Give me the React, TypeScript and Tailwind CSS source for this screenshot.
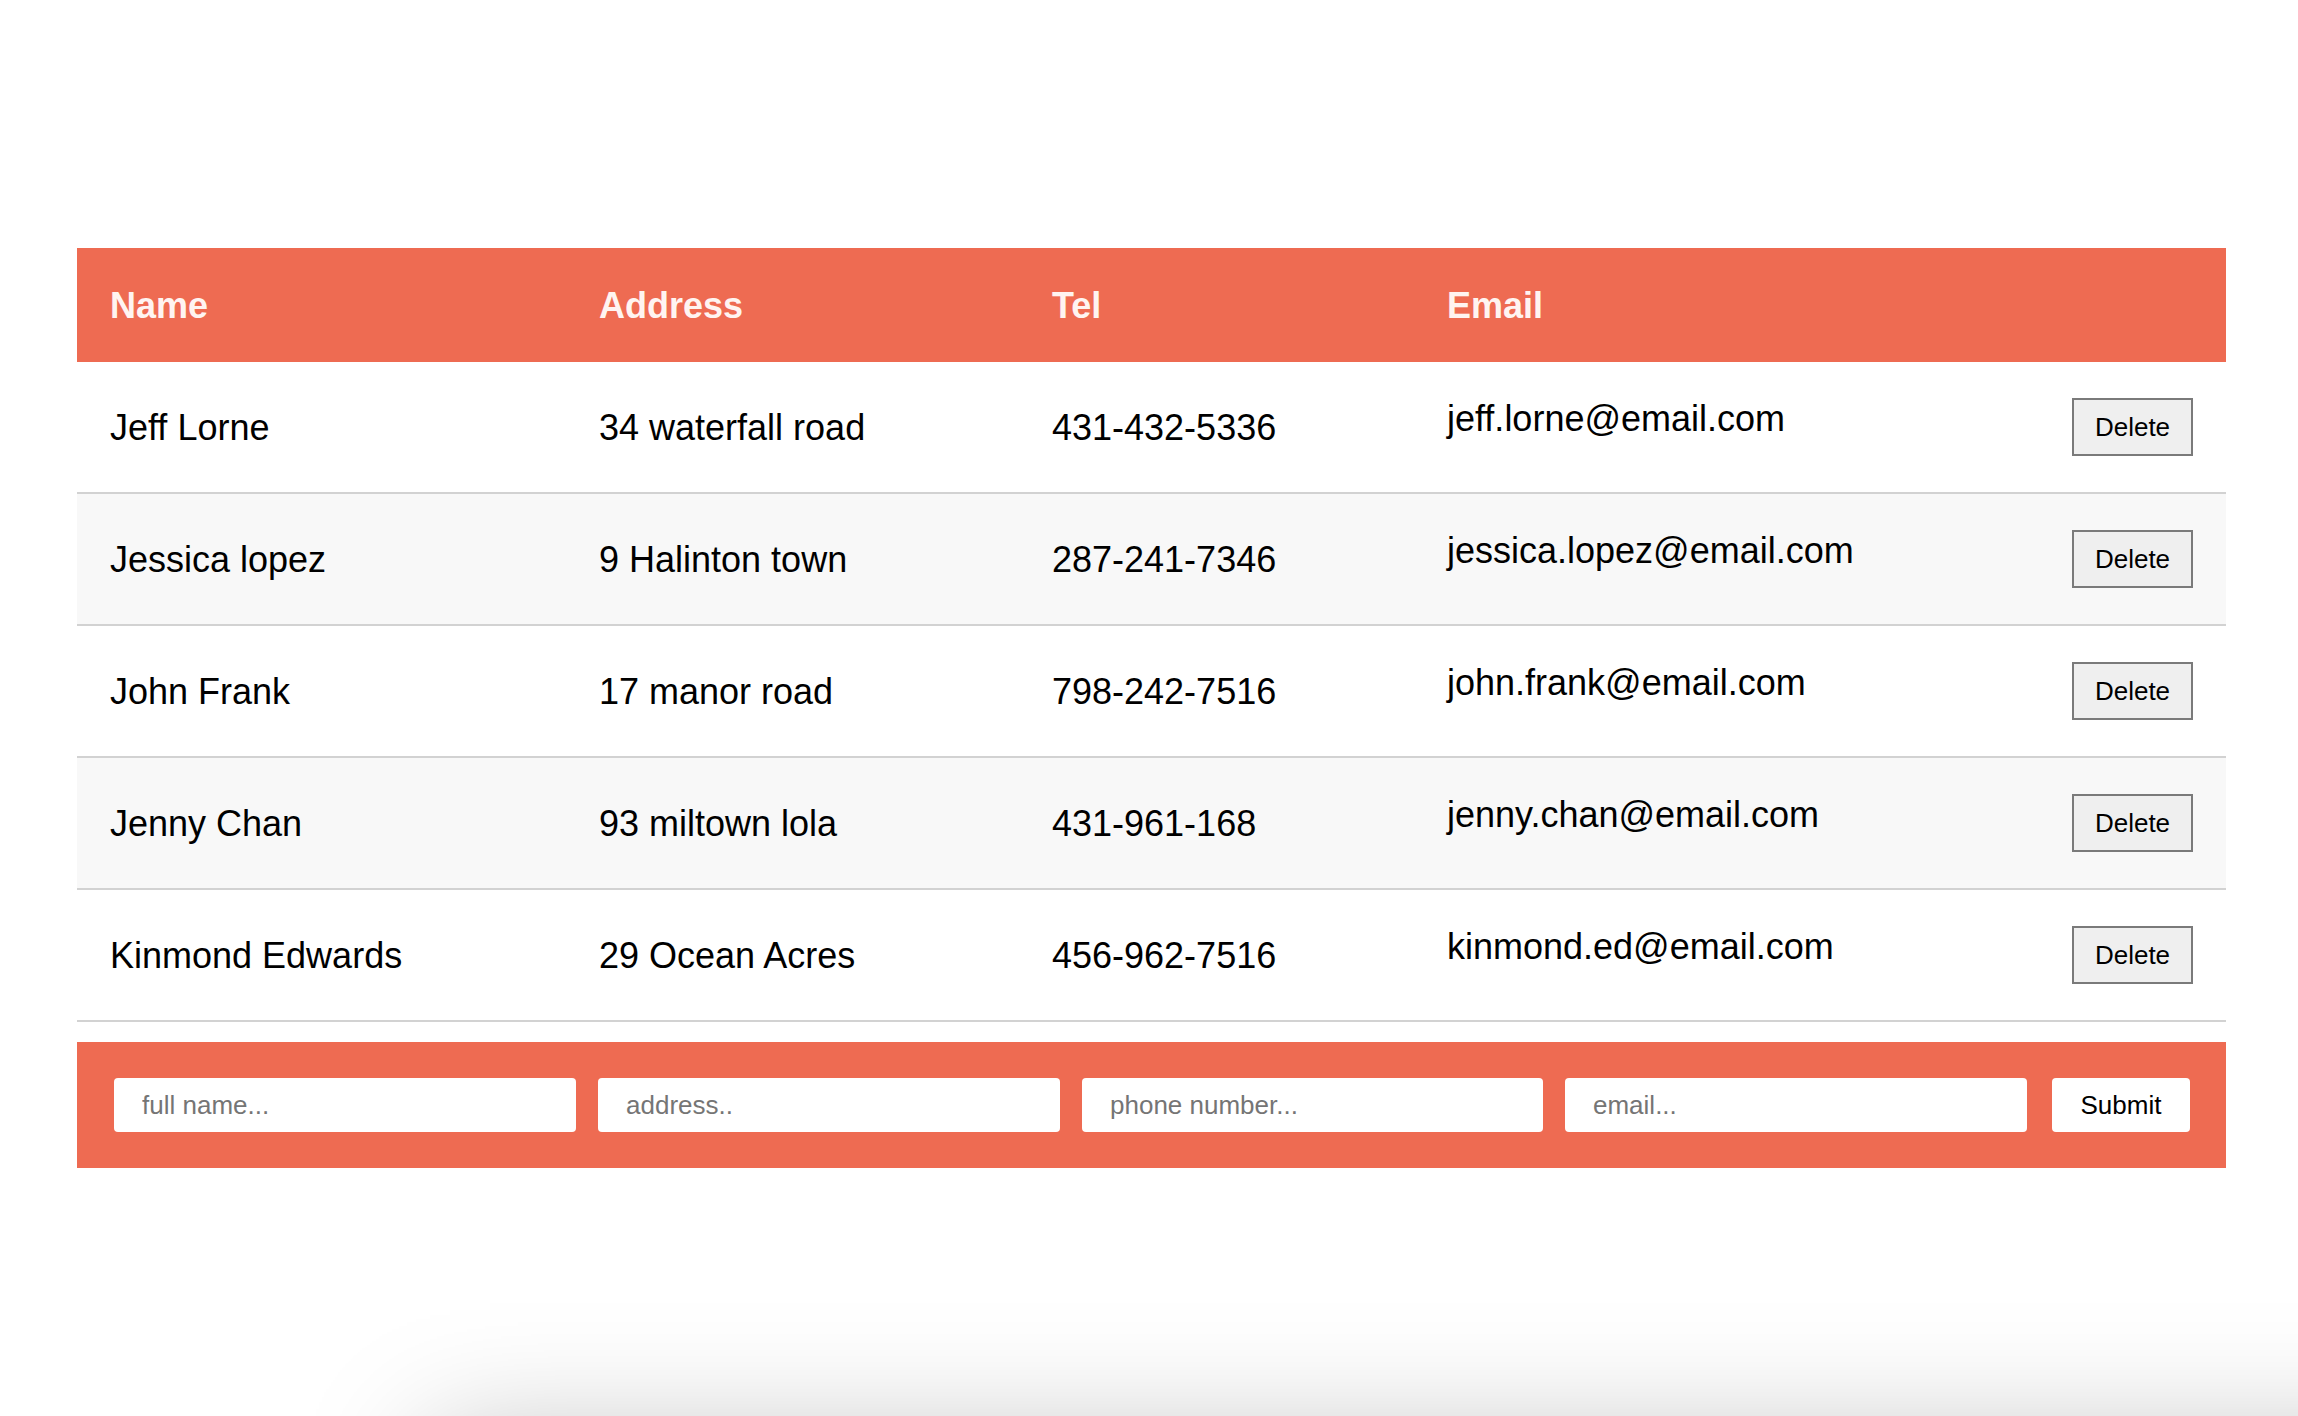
import React from "react";

const rows = [
  { name: "Jeff Lorne", address: "34 waterfall road", tel: "431-432-5336", email: "jeff.lorne@email.com" },
  { name: "Jessica lopez", address: "9 Halinton town", tel: "287-241-7346", email: "jessica.lopez@email.com" },
  { name: "John Frank", address: "17 manor road", tel: "798-242-7516", email: "john.frank@email.com" },
  { name: "Jenny Chan", address: "93 miltown lola", tel: "431-961-168", email: "jenny.chan@email.com" },
  { name: "Kinmond Edwards", address: "29 Ocean Acres", tel: "456-962-7516", email: "kinmond.ed@email.com" },
];

export default function App() {
  return (
    <div
      className="relative min-h-[1416px] bg-white pt-[248px] text-black"
      style={{ fontFamily: '"Liberation Sans", Arial, Helvetica, sans-serif' }}
    >
      <div className="ml-[77px] w-[2149px]">
        <div className="grid h-[114px] grid-cols-[489px_453px_395px_812px] items-center bg-[#ee6b52] text-[36px] font-bold leading-[41px] text-[#fff4f1]">
          <div className="pl-[33px]">Name</div>
          <div className="pl-[33px]">Address</div>
          <div className="pl-[33px]">Tel</div>
          <div className="pl-[33px]">Email</div>
        </div>
        {rows.map((r, i) => (
          <div
            key={r.name}
            className={
              "grid h-[132px] grid-cols-[489px_453px_395px_812px] items-center border-b-2 border-[#d2d2d2] text-[36px] leading-[41px] " +
              (i % 2 === 1 ? "bg-[#f8f8f8]" : "bg-white")
            }
          >
            <div className="pl-[33px]">{r.name}</div>
            <div className="pl-[33px]">{r.address}</div>
            <div className="pl-[33px]">{r.tel}</div>
            <div className="flex items-start justify-between pl-[33px] pr-[33px]">
              <span>{r.email}</span>
              <button className="flex h-[58px] w-[121px] items-center justify-center border-2 border-[#7a7a7a] bg-[#efefef] text-[26px] leading-none text-black">
                Delete
              </button>
            </div>
          </div>
        ))}
        <form
          className="mt-[20px] flex h-[126px] items-center bg-[#ee6b52] pl-[37px] pr-[36px]"
          onSubmit={(e) => e.preventDefault()}
        >
          <input
            className="h-[54px] w-[462px] rounded-[4px] bg-white pl-[28px] text-[26px] text-black outline-none placeholder:text-[#757575]"
            placeholder="full name..."
          />
          <input
            className="ml-[22px] h-[54px] w-[462px] rounded-[4px] bg-white pl-[28px] text-[26px] text-black outline-none placeholder:text-[#757575]"
            placeholder="address.."
          />
          <input
            className="ml-[22px] h-[54px] w-[461px] rounded-[4px] bg-white pl-[28px] text-[26px] text-black outline-none placeholder:text-[#757575]"
            placeholder="phone number..."
          />
          <input
            className="ml-[22px] h-[54px] w-[462px] rounded-[4px] bg-white pl-[28px] text-[26px] text-black outline-none placeholder:text-[#757575]"
            placeholder="email..."
          />
          <button
            type="submit"
            className="ml-[25px] flex h-[54px] w-[138px] items-center justify-center rounded-[4px] bg-white text-[26px] leading-none text-black"
          >
            Submit
          </button>
        </form>
      </div>
      <div className="pointer-events-none fixed left-[470px] right-[-200px] top-[1480px] h-[300px] shadow-[0_0_120px_40px_rgba(0,0,0,0.26)]" />
    </div>
  );
}
